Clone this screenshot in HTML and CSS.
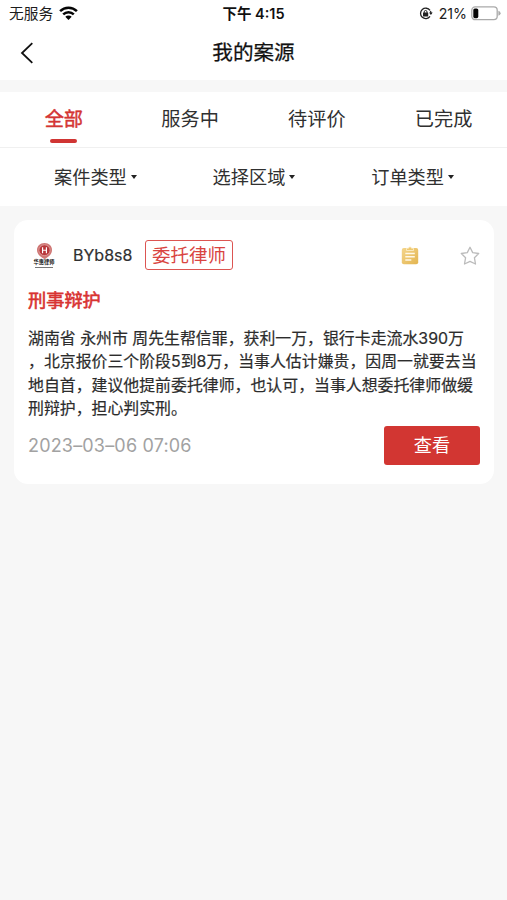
FILE: index.html
```html
<!DOCTYPE html>
<html lang="zh-CN">
<head>
<meta charset="utf-8">
<title>我的案源</title>
<link rel="stylesheet" href="styles.css">
</head>
<body>
<header class="top">
  <div class="status">
    <div class="status-left">
      <span>无服务</span>
      <svg class="wifi" width="19" height="14" viewBox="0 0 19 14"><g fill="none" stroke="#050505" stroke-width="2.5"><path d="M1.1 5.1a12 12 0 0 1 16.8 0"/><path d="M4.2 8.4a7.6 7.6 0 0 1 10.6 0"/></g><path d="M6.3 10.7a4.6 4.6 0 0 1 6.4 0L9.5 13.9z" fill="#050505"/></svg>
    </div>
    <div class="clock">下午 4:15</div>
    <div class="status-right">
      <svg class="lock" width="14" height="13" viewBox="0 0 14 13"><path d="M11 3.4A5.2 5.2 0 1 0 11 9.4M11.4 4.2q.6 1 .5 2.5" fill="none" stroke="#222" stroke-width="1.3"/><path d="M10 5.5h3.7L11.9 8z" fill="#222"/><rect x="4" y="5.5" width="5.2" height="4" rx=".5" fill="#222"/><path d="M5.2 6V4.9a1.4 1.4 0 0 1 2.8 0V6" fill="none" stroke="#222"/></svg>
      <span class="percent">21%</span>
      <svg class="battery" width="30" height="15" viewBox="0 0 30 15"><rect x=".8" y=".9" width="25.4" height="12.8" rx="3.4" fill="none" stroke="#aaa" stroke-width="1.3"/><rect x="2.3" y="2.4" width="5" height="9.8" rx="1.6" fill="#050505"/><path d="M27.4 4.8q2.2.8 2.2 2.5t-2.2 2.5z" fill="#aaa"/></svg>
    </div>
  </div>
  <div class="nav">
    <svg class="back" width="14" height="22" viewBox="0 0 14 22"><path d="M12.3 1.2 2 11l10.3 9.8" fill="none" stroke="#111" stroke-width="1.8"/></svg>
    <h1>我的案源</h1>
  </div>
</header>
<nav class="tabs">
  <div class="tab active">全部</div>
  <div class="tab">服务中</div>
  <div class="tab">待评价</div>
  <div class="tab">已完成</div>
</nav>
<div class="filters">
  <div class="filter">案件类型<i class="caret"></i></div>
  <div class="filter">选择区域<i class="caret"></i></div>
  <div class="filter">订单类型<i class="caret"></i></div>
</div>
<main class="card">
  <div class="card-head">
    <div class="logo">
      <svg width="15" height="16" viewBox="0 0 14 15.5" preserveAspectRatio="none"><path d="M7 0c4.2 0 7 3 7 6.8 0 3.8-3 6.7-7 8.7-4-2-7-4.900-7-8.700C0 3 2.800 0 7 0z" fill="#cf7775"/><circle cx="7" cy="7" r="5.2" fill="#b8363a" stroke="#e3aaa7" stroke-width=".7"/><path d="M5.200 4v6M8.800 4v6M5.200 7h3.600" stroke="#fff" stroke-width="1.1"/></svg>
      <span class="logo-name">华惠律师</span>
      <i class="logo-line"></i>
    </div>
    <span class="user">BYb8s8</span>
    <span class="tag">委托律师</span>
    <svg class="note" width="18" height="19" viewBox="0 0 18 19"><defs><linearGradient id="gold" x2="1" y2="1"><stop stop-color="#f4d58c"/><stop offset="1" stop-color="#e3b550"/></linearGradient></defs><rect x=".8" y="2" width="16.4" height="16.2" rx="2" fill="url(#gold)"/><path d="M5.5 4.5V2.300h2a1.500 1.500 0 0 1 3 0h2v2.200z" fill="#efc970" stroke="#fff6dc" stroke-width=".7"/><path d="M4.300 7.500h9.500M4.300 10.700h9.500M4.300 14h6" stroke="#fff8e6" stroke-width="1.5"/></svg>
    <svg class="star" width="20" height="20" viewBox="0 0 20 20"><path d="m10 1.300 2.700 5.300 6 .9-4.300 4.200 1.100 6.300-5.500-2.600L4.500 18l1.100-6.300-4.300-4.200 6-.9z" fill="none" stroke="#bbb" stroke-width="1.3" stroke-linejoin="round"/></svg>
  </div>
  <h2>刑事辩护</h2>
  <div class="desc">
    <div>湖南省 永州市 周先生帮信罪，获利一万，银行卡走流水390万</div>
    <div>，北京报价三个阶段5到8万，当事人估计嫌贵，因周一就要去当</div>
    <div>地自首，建议他提前委托律师，也认可，当事人想委托律师做缓</div>
    <div>刑辩护，担心判实刑。</div>
  </div>
  <div class="card-foot">
    <time>2023–03–06 07:06</time>
    <button>查看</button>
  </div>
</main>
</body>
</html>
```

FILE: styles.css
```css
* { box-sizing: border-box; }
body {
  margin: 0;
  min-height: 900px;
  background: #f7f7f7;
  color: #303030;
  font-family: Inter, "Noto Sans CJK SC", sans-serif;
}
.top { height: 80px; background: #fff; }
.status {
  display: grid;
  grid-template-columns: 1fr auto 1fr;
  align-items: center;
  height: 28px;
  padding: 0 6px 0 9px;
  font-size: 14.7px;
  line-height: 28px;
  color: #1c1c1c;
}
.status-left, .status-right { display: flex; align-items: center; }
.status-left { gap: 6px; }
.status-right { justify-content: flex-end; }
.wifi { margin-top: -3px; }
.clock { margin-right: 3px; font-size: 14.5px; font-weight: 600; color: #111; }
.lock { margin-top: -1px; }
.percent { margin: 0 4px 0 6px; font-size: 14.2px; }
.battery { margin-top: -2px; }
.nav {
  display: grid;
  grid-template-columns: 1fr auto 1fr;
  align-items: center;
  height: 49px;
  padding: 0 20px;
}
h1 {
  grid-column: 2;
  margin: 0;
  font-size: 20.6px;
  font-weight: 400;
  line-height: 30px;
  color: #111;
  -webkit-text-stroke: .25px #111;
}
.tabs {
  display: grid;
  grid-template-columns: repeat(4, 1fr);
  height: 56px;
  margin-top: 12px;
  background: #fff;
  border-bottom: 1px solid #f0f0f0;
}
.tab {
  display: flex;
  flex-direction: column;
  align-items: center;
  padding-top: 13px;
  font-size: 19.2px;
  line-height: 28px;
}
.active { padding-left: 1px; color: #d43533; -webkit-text-stroke: .5px #d43533; }
.active::after {
  content: "";
  width: 27px;
  height: 4px;
  margin-top: 6px;
  border-radius: 2px;
  background: #d03533;
}
.filters {
  display: flex;
  justify-content: space-between;
  height: 58px;
  padding: 0 53px 2px 54px;
  background: #fff;
}
.filter { display: flex; align-items: center; font-size: 18.2px; }
.caret {
  margin: 1px 0 0 4px;
  border: 3.5px solid transparent;
  border-top: 4px solid #222;
  border-bottom: 0;
}
.card {
  height: 264px;
  margin: 14px 13px 0 14px;
  padding: 20px 14px 0;
  border-radius: 14px;
  background: #fff;
}
.card-head { display: flex; align-items: center; height: 30px; }
.logo {
  display: flex;
  flex-direction: column;
  align-items: center;
  width: 32px;
  margin-top: 1px;
}
.logo-name {
  font-size: 5.2px;
  font-weight: 700;
  line-height: 7px;
  white-space: nowrap;
  color: #111;
}
.logo-line { width: 18px; height: 1px; margin-top: 1px; background: #777; }
.user { width: 59px; margin-left: 13px; font-size: 16px; -webkit-text-stroke: .2px #303030; }
.tag {
  height: 30px;
  margin-left: 13px;
  padding: 1px 6px 0;
  border: 1.5px solid #dc5552;
  border-radius: 3px;
  font-size: 18.5px;
  line-height: 27px;
  color: #d94441;
}
.note { margin: 0 41px 0 auto; }
.star { margin-top: 1px; }
h2 {
  margin: 16px 0 0;
  font-size: 18.2px;
  font-weight: 400;
  line-height: 28px;
  color: #d83331;
  -webkit-text-stroke: .6px #d83331;
}
.desc {
  margin-top: 13px;
  font-size: 15.9px;
  line-height: 23.3px;
  white-space: nowrap;
  color: #2c2c2c;
  -webkit-text-stroke: .2px #2c2c2c;
}
.card-foot {
  display: flex;
  align-items: center;
  justify-content: space-between;
  margin-top: 6px;
}
time { font-size: 18px; letter-spacing: .18px; color: #a2a2a2; }
button {
  width: 96px;
  height: 39px;
  padding: 0;
  border: 0;
  border-radius: 3px;
  background: #d23632;
  color: #fff;
  font: 18.2px/39px Inter, "Noto Sans CJK SC", sans-serif;
}
```
